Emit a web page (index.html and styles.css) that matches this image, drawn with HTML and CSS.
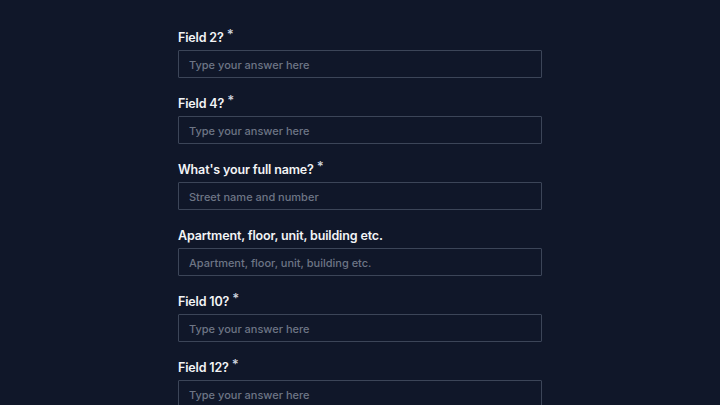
FILE: index.html
```html
<!DOCTYPE html>
<html lang="en">
<head>
<meta charset="utf-8">
<title>Form</title>
<link rel="stylesheet" href="styles.css">
</head>
<body>
<form class="form">
  <div class="field">
    <label class="label">Field 2?<sup class="req">*</sup></label>
    <input class="input" type="text" placeholder="Type your answer here">
  </div>
  <div class="field">
    <label class="label">Field 4?<sup class="req">*</sup></label>
    <input class="input" type="text" placeholder="Type your answer here">
  </div>
  <div class="field">
    <label class="label">What's your full name?<sup class="req">*</sup></label>
    <input class="input" type="text" placeholder="Street name and number">
  </div>
  <div class="field">
    <label class="label">Apartment, floor, unit, building etc.</label>
    <input class="input" type="text" placeholder="Apartment, floor, unit, building etc.">
  </div>
  <div class="field">
    <label class="label">Field 10?<sup class="req">*</sup></label>
    <input class="input" type="text" placeholder="Type your answer here">
  </div>
  <div class="field">
    <label class="label">Field 12?<sup class="req">*</sup></label>
    <input class="input" type="text" placeholder="Type your answer here">
  </div>
</form>
</body>
</html>
```

FILE: styles.css
```css
html, body {
  margin: 0;
  padding: 0;
  background: #101729;
  font-family: Inter, "Noto Sans", sans-serif;
  overflow: hidden;
}
.form {
  width: 364px;
  margin: 0 auto;
  padding-top: 29px;
  display: flex;
  flex-direction: column;
  gap: 17px;
}
.field {
  display: flex;
  flex-direction: column;
}
.label {
  color: #f3f4f6;
  font-size: 12.5px;
  font-weight: 600;
  letter-spacing: -0.15px;
  line-height: 17px;
  margin-bottom: 4px;
}
.req {
  color: #cbd2dc;
  font-size: 13px;
  margin-left: 3px;
  vertical-align: 3px;
  line-height: 0;
}
.input {
  box-sizing: border-box;
  height: 28px;
  width: 100%;
  margin: 0;
  padding: 1px 10px 0;
  background: #101729;
  border: 1px solid #3c4558;
  border-radius: 1px;
  color: #e5e7eb;
  font-family: Inter, "Noto Sans", sans-serif;
  font-size: 11px;
  font-weight: 500;
  outline: none;
}
.input::placeholder {
  color: #6d7585;
}
```
